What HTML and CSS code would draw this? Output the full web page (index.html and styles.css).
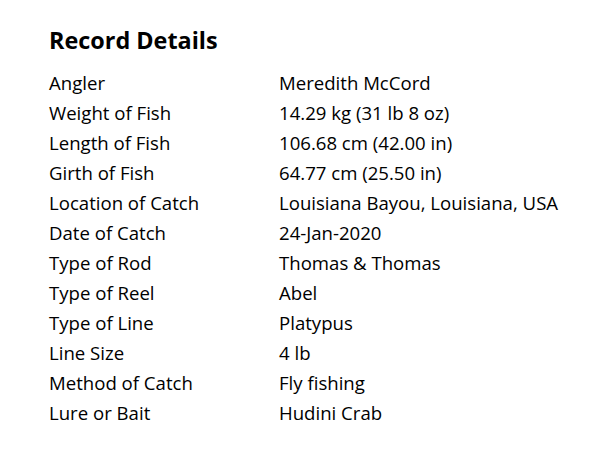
FILE: index.html
```html
<!DOCTYPE html>
<html>
<head>
<meta charset="utf-8">
<link rel="stylesheet" href="styles.css">
</head>
<body>
<section class="record">
  <h2 class="title">Record Details</h2>
  <table class="details">
    <tbody>
      <tr><td class="label">Angler</td><td class="value">Meredith McCord</td></tr>
      <tr><td class="label">Weight of Fish</td><td class="value">14.29 kg (31 lb 8 oz)</td></tr>
      <tr><td class="label">Length of Fish</td><td class="value">106.68 cm (42.00 in)</td></tr>
      <tr><td class="label">Girth of Fish</td><td class="value">64.77 cm (25.50 in)</td></tr>
      <tr><td class="label">Location of Catch</td><td class="value">Louisiana Bayou, Louisiana, USA</td></tr>
      <tr><td class="label">Date of Catch</td><td class="value">24-Jan-2020</td></tr>
      <tr><td class="label">Type of Rod</td><td class="value">Thomas &amp; Thomas</td></tr>
      <tr><td class="label">Type of Reel</td><td class="value">Abel</td></tr>
      <tr><td class="label">Type of Line</td><td class="value">Platypus</td></tr>
      <tr><td class="label">Line Size</td><td class="value">4 lb</td></tr>
      <tr><td class="label">Method of Catch</td><td class="value">Fly fishing</td></tr>
      <tr><td class="label">Lure or Bait</td><td class="value">Hudini Crab</td></tr>
    </tbody>
  </table>
</section>
</body>
</html>
```
FILE: styles.css
```css
html, body {
  margin: 0;
  padding: 0;
  background: #fff;
}
body {
  font-family: "Open Sans", "Noto Sans", sans-serif;
  color: #000;
}
.record {
  padding: 25px 0 0 49px;
}
.title {
  margin: 0 0 12px 0;
  font-size: 23.4px;
  font-weight: 700;
  line-height: 30px;
}
.details {
  border-collapse: collapse;
  font-size: 18.6px;
}
.details td {
  padding: 0;
  height: 30px;
  vertical-align: middle;
  white-space: nowrap;
}
.label {
  width: 230px;
}
```
